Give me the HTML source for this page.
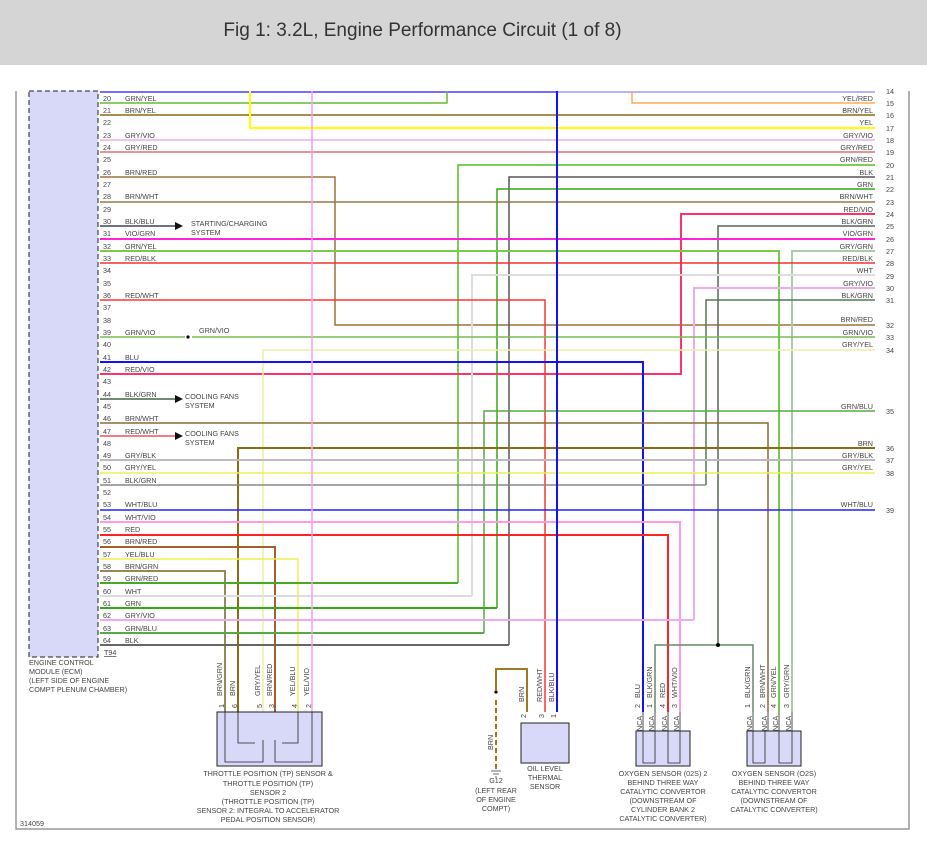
<!DOCTYPE html>
<html><head><meta charset="utf-8"><style>
html,body{margin:0;padding:0;background:#fff;width:927px;height:842px;overflow:hidden}
.hdr{position:absolute;left:0;top:0;width:927px;height:65px;background:#d5d5d5}
.hdr div{position:absolute;left:0;width:845px;top:20px;text-align:center;font:19px "Liberation Sans",sans-serif;color:#333}
svg{position:absolute;left:0;top:0}
text{font-family:"Liberation Sans",sans-serif;font-size:7.2px;fill:#444}
</style></head><body>
<div class="hdr"><div>Fig 1: 3.2L, Engine Performance Circuit (1 of 8)</div></div>
<svg width="927" height="842" viewBox="0 0 927 842">
<g fill="none" stroke="#999" stroke-width="1.5">
<path d="M16 91V829H909V91"/>
</g>
<rect x="29" y="91" width="69" height="566" fill="#d8d9f8" stroke="#222" stroke-dasharray="5 3"/>
<g fill="none" stroke-width="1.5">
<path d="M100 92H557" stroke="#4040ff"/><path d="M557 92H875" stroke="#9a9aff"/>
<path d="M100 103H447V91" stroke="#66bb33"/>
<path d="M632 91V103H875" stroke="#ffaa55"/>
<path d="M100 115H875" stroke="#8b6a10"/>
<path d="M250 91V128H875" stroke="#ffff00" stroke-width="2"/>
<path d="M100 140H875" stroke="#e8b0e8"/>
<path d="M100 152H875" stroke="#e07070"/>
<path d="M458 583V165H875" stroke="#55bb22"/>
<path d="M100 177H335V325H875" stroke="#a0703a"/>
<path d="M509 645V177H875" stroke="#555"/>
<path d="M497 608V189H875" stroke="#33aa11"/>
<path d="M100 202H875" stroke="#9a7a40"/>
<path d="M100 374H681V214H875" stroke="#ff3366" stroke-width="2"/>
<path d="M100 226H175" stroke="#445"/>
<path d="M718 645V226H875" stroke="#556655"/>
<path d="M100 239H875" stroke="#ff22dd" stroke-width="2"/>
<path d="M100 251H779V712" stroke="#77cc44" stroke-width="2"/>
<path d="M792 712V251H875" stroke="#aaccaa" stroke-width="2"/>
<path d="M100 263H875" stroke="#ee3333"/>
<path d="M472 596V275H875" stroke="#ddd" stroke-width="2"/>
<path d="M694 620V288H875" stroke="#eeaaee" stroke-width="2"/>
<path d="M706 485V300H875" stroke="#557755"/>
<path d="M100 300H545V712" stroke="#ff3333"/>
<path d="M100 337H185M192 337H875" stroke="#77bb55"/>
<path d="M263 712V350H875" stroke="#eeeeaa"/>
<path d="M100 362H643V712" stroke="#1111ff" stroke-width="2"/>
<path d="M100 399H175" stroke="#446644"/>
<path d="M484 633V411H875" stroke="#55aa44"/>
<path d="M100 423H768V712" stroke="#8b6a30"/>
<path d="M100 436H175" stroke="#ee5555"/>
<path d="M238 712V448H875" stroke="#8b6a10" stroke-width="2"/>
<path d="M100 460H875" stroke="#bbb" stroke-width="2"/>
<path d="M100 473H875" stroke="#eeee55"/>
<path d="M100 485H706" stroke="#888"/>
<path d="M100 510H875" stroke="#2222ff"/>
<path d="M100 522H680V712" stroke="#ff99ee" stroke-width="2"/>
<path d="M100 535H668V712" stroke="#ff2222" stroke-width="2"/>
<path d="M100 547H275V712" stroke="#a06030" stroke-width="2"/>
<path d="M100 559H298V712" stroke="#eeee55" stroke-width="1.5"/>
<path d="M100 571H225V712" stroke="#998855" stroke-width="2"/>
<path d="M100 583H458" stroke="#44aa22" stroke-width="2"/>
<path d="M100 596H472" stroke="#ddd" stroke-width="2"/>
<path d="M100 608H497" stroke="#33aa11" stroke-width="2"/>
<path d="M100 620H694" stroke="#eeaaee" stroke-width="2"/>
<path d="M100 633H484" stroke="#55aa44" stroke-width="2"/>
<path d="M100 645H509" stroke="#666" stroke-width="2"/>
<path d="M312 91V712" stroke="#ff99ee" stroke-width="1.5"/>
<path d="M557 91V712" stroke="#1111ff" stroke-width="2"/>
<path d="M655 712V645H753V712" stroke="#668866"/>
<path d="M527 712V669H496V690" stroke="#a07a20" stroke-width="2"/>
<path d="M496 700V770" stroke="#a07a20" stroke-width="2" stroke-dasharray="5 3"/>
</g>
<circle cx="188" cy="337" r="1.6" fill="#000"/>
<circle cx="718" cy="645" r="2" fill="#000"/>
<circle cx="496" cy="692" r="1.6" fill="#000"/>
<path d="M175 222l8 4-8 4zM175 395l8 4-8 4zM175 432l8 4-8 4z" fill="#111"/>
<rect x="217" y="712" width="105" height="54" fill="#d8d9f8" stroke="#222"/>
<rect x="521" y="723" width="48" height="40" fill="#d8d9f8" stroke="#222"/>
<rect x="636" y="731" width="54" height="35" fill="#d8d9f8" stroke="#222"/>
<rect x="747" y="731" width="54" height="35" fill="#d8d9f8" stroke="#222"/>
<g fill="none" stroke="#222" stroke-width="0.8">
<path d="M225 712V762H263V740M312 712V762H275V740M238 712V743H255M298 712V743H282"/>
<path d="M643 712V731M655 712V731M668 712V731M680 712V731M753 712V731M768 712V731M779 712V731M792 712V731"/>
<path d="M643 731V763H655V731M668 731V763H680V731M753 731V763H765V731M779 731V763H792V731"/>
</g>
<g>
<text x="103" y="101">20</text><text x="125" y="101">GRN/YEL</text>
<text x="103" y="113">21</text><text x="125" y="113">BRN/YEL</text>
<text x="103" y="125">22</text>
<text x="103" y="138">23</text><text x="125" y="138">GRY/VIO</text>
<text x="103" y="150">24</text><text x="125" y="150">GRY/RED</text>
<text x="103" y="162">25</text>
<text x="103" y="175">26</text><text x="125" y="175">BRN/RED</text>
<text x="103" y="187">27</text>
<text x="103" y="199">28</text><text x="125" y="199">BRN/WHT</text>
<text x="103" y="212">29</text>
<text x="103" y="224">30</text><text x="125" y="224">BLK/BLU</text>
<text x="103" y="236">31</text><text x="125" y="236">VIO/GRN</text>
<text x="103" y="249">32</text><text x="125" y="249">GRN/YEL</text>
<text x="103" y="261">33</text><text x="125" y="261">RED/BLK</text>
<text x="103" y="273">34</text>
<text x="103" y="286">35</text>
<text x="103" y="298">36</text><text x="125" y="298">RED/WHT</text>
<text x="103" y="310">37</text>
<text x="103" y="323">38</text>
<text x="103" y="335">39</text><text x="125" y="335">GRN/VIO</text><text x="199" y="333">GRN/VIO</text>
<text x="103" y="347">40</text>
<text x="103" y="360">41</text><text x="125" y="360">BLU</text>
<text x="103" y="372">42</text><text x="125" y="372">RED/VIO</text>
<text x="103" y="384">43</text>
<text x="103" y="397">44</text><text x="125" y="397">BLK/GRN</text>
<text x="103" y="409">45</text>
<text x="103" y="421">46</text><text x="125" y="421">BRN/WHT</text>
<text x="103" y="434">47</text><text x="125" y="434">RED/WHT</text>
<text x="103" y="446">48</text>
<text x="103" y="458">49</text><text x="125" y="458">GRY/BLK</text>
<text x="103" y="470">50</text><text x="125" y="470">GRY/YEL</text>
<text x="103" y="483">51</text><text x="125" y="483">BLK/GRN</text>
<text x="103" y="495">52</text>
<text x="103" y="507">53</text><text x="125" y="507">WHT/BLU</text>
<text x="103" y="520">54</text><text x="125" y="520">WHT/VIO</text>
<text x="103" y="532">55</text><text x="125" y="532">RED</text>
<text x="103" y="544">56</text><text x="125" y="544">BRN/RED</text>
<text x="103" y="557">57</text><text x="125" y="557">YEL/BLU</text>
<text x="103" y="569">58</text><text x="125" y="569">BRN/GRN</text>
<text x="103" y="581">59</text><text x="125" y="581">GRN/RED</text>
<text x="103" y="594">60</text><text x="125" y="594">WHT</text>
<text x="103" y="606">61</text><text x="125" y="606">GRN</text>
<text x="103" y="618">62</text><text x="125" y="618">GRY/VIO</text>
<text x="103" y="631">63</text><text x="125" y="631">GRN/BLU</text>
<text x="103" y="643">64</text><text x="125" y="643">BLK</text>
<text x="104" y="655" text-decoration="underline">T94</text>
<text x="191" y="226">STARTING/CHARGING</text><text x="191" y="235">SYSTEM</text>
<text x="185" y="399">COOLING FANS</text><text x="185" y="408">SYSTEM</text>
<text x="185" y="436">COOLING FANS</text><text x="185" y="445">SYSTEM</text>
<text x="29" y="665">ENGINE CONTROL</text><text x="29" y="674">MODULE (ECM)</text>
<text x="29" y="683">(LEFT SIDE OF ENGINE</text><text x="29" y="692">COMPT PLENUM CHAMBER)</text>
<text x="20" y="826">314059</text>
</g>
<g text-anchor="end">
<text x="873" y="101">YEL/RED</text><text x="873" y="113">BRN/YEL</text><text x="873" y="125">YEL</text>
<text x="873" y="138">GRY/VIO</text><text x="873" y="150">GRY/RED</text><text x="873" y="162">GRN/RED</text>
<text x="873" y="175">BLK</text><text x="873" y="187">GRN</text><text x="873" y="199">BRN/WHT</text>
<text x="873" y="212">RED/VIO</text><text x="873" y="224">BLK/GRN</text><text x="873" y="236">VIO/GRN</text>
<text x="873" y="249">GRY/GRN</text><text x="873" y="261">RED/BLK</text><text x="873" y="273">WHT</text>
<text x="873" y="286">GRY/VIO</text><text x="873" y="298">BLK/GRN</text><text x="873" y="322">BRN/RED</text>
<text x="873" y="335">GRN/VIO</text><text x="873" y="347">GRY/YEL</text><text x="873" y="409">GRN/BLU</text>
<text x="873" y="446">BRN</text><text x="873" y="458">GRY/BLK</text><text x="873" y="470">GRY/YEL</text>
<text x="873" y="507">WHT/BLU</text>
</g>
<g>
<text x="886" y="94">14</text><text x="886" y="106">15</text><text x="886" y="118">16</text><text x="886" y="131">17</text>
<text x="886" y="143">18</text><text x="886" y="155">19</text><text x="886" y="168">20</text><text x="886" y="180">21</text>
<text x="886" y="192">22</text><text x="886" y="205">23</text><text x="886" y="217">24</text><text x="886" y="229">25</text>
<text x="886" y="242">26</text><text x="886" y="254">27</text><text x="886" y="266">28</text><text x="886" y="279">29</text>
<text x="886" y="291">30</text><text x="886" y="303">31</text><text x="886" y="328">32</text><text x="886" y="340">33</text>
<text x="886" y="353">34</text><text x="886" y="414">35</text><text x="886" y="451">36</text><text x="886" y="463">37</text>
<text x="886" y="476">38</text><text x="886" y="513">39</text>
</g>
<g>
<text transform="translate(222,696) rotate(-90)">BRN/GRN</text>
<text transform="translate(235,696) rotate(-90)">BRN</text>
<text transform="translate(260,696) rotate(-90)">GRY/YEL</text>
<text transform="translate(272,696) rotate(-90)">BRN/RED</text>
<text transform="translate(295,696) rotate(-90)">YEL/BLU</text>
<text transform="translate(309,696) rotate(-90)">YEL/VIO</text>
<text transform="translate(224,708) rotate(-90)">1</text><text transform="translate(237,708) rotate(-90)">6</text>
<text transform="translate(262,708) rotate(-90)">5</text><text transform="translate(274,708) rotate(-90)">3</text>
<text transform="translate(297,708) rotate(-90)">4</text><text transform="translate(311,708) rotate(-90)">2</text>
<text transform="translate(524,702) rotate(-90)">BRN</text>
<text transform="translate(542,702) rotate(-90)">RED/WHT</text>
<text transform="translate(554,702) rotate(-90)">BLK/BLU</text>
<text transform="translate(526,718) rotate(-90)">2</text><text transform="translate(544,718) rotate(-90)">3</text><text transform="translate(556,718) rotate(-90)">1</text>
<text transform="translate(493,750) rotate(-90)">BRN</text>
<text transform="translate(640,698) rotate(-90)">BLU</text>
<text transform="translate(652,698) rotate(-90)">BLK/GRN</text>
<text transform="translate(665,698) rotate(-90)">RED</text>
<text transform="translate(677,698) rotate(-90)">WHT/VIO</text>
<text transform="translate(750,698) rotate(-90)">BLK/GRN</text>
<text transform="translate(765,698) rotate(-90)">BRN/WHT</text>
<text transform="translate(776,698) rotate(-90)">GRN/YEL</text>
<text transform="translate(789,698) rotate(-90)">GRY/GRN</text>
<text transform="translate(640,708) rotate(-90)">2</text><text transform="translate(652,708) rotate(-90)">1</text>
<text transform="translate(665,708) rotate(-90)">4</text><text transform="translate(677,708) rotate(-90)">3</text>
<text transform="translate(750,708) rotate(-90)">1</text><text transform="translate(765,708) rotate(-90)">2</text>
<text transform="translate(776,708) rotate(-90)">4</text><text transform="translate(789,708) rotate(-90)">3</text>
<text transform="translate(642,731) rotate(-90)">NCA</text><text transform="translate(654,731) rotate(-90)">NCA</text>
<text transform="translate(667,731) rotate(-90)">NCA</text><text transform="translate(679,731) rotate(-90)">NCA</text>
<text transform="translate(752,731) rotate(-90)">NCA</text><text transform="translate(767,731) rotate(-90)">NCA</text>
<text transform="translate(778,731) rotate(-90)">NCA</text><text transform="translate(791,731) rotate(-90)">NCA</text>
</g>
<g text-anchor="middle">
<text x="268" y="776">THROTTLE POSITION (TP) SENSOR &amp;</text>
<text x="268" y="786">THROTTLE POSITION (TP)</text>
<text x="268" y="795">SENSOR 2</text>
<text x="268" y="804">(THROTTLE POSITION (TP)</text>
<text x="268" y="813">SENSOR 2: INTEGRAL TO ACCELERATOR</text>
<text x="268" y="822">PEDAL POSITION SENSOR)</text>
<text x="496" y="783">G12</text><text x="496" y="793">(LEFT REAR</text><text x="496" y="802">OF ENGINE</text><text x="496" y="811">COMPT)</text>
<text x="545" y="771">OIL LEVEL</text><text x="545" y="780">THERMAL</text><text x="545" y="789">SENSOR</text>
<text x="663" y="776">OXYGEN SENSOR (02S) 2</text><text x="663" y="785">BEHIND THREE WAY</text>
<text x="663" y="794">CATALYTIC CONVERTOR</text><text x="663" y="803">(DOWNSTREAM OF</text>
<text x="663" y="812">CYLINDER BANK 2</text><text x="663" y="821">CATALYTIC CONVERTER)</text>
<text x="774" y="776">OXYGEN SENSOR (O2S)</text><text x="774" y="785">BEHIND THREE WAY</text>
<text x="774" y="794">CATALYTIC CONVERTOR</text><text x="774" y="803">(DOWNSTREAM OF</text>
<text x="774" y="812">CATALYTIC CONVERTER)</text>
</g>
<path d="M491 771h10M493 774h6M495 777h2" stroke="#666" stroke-width="1"/>
</svg>
</body></html>
